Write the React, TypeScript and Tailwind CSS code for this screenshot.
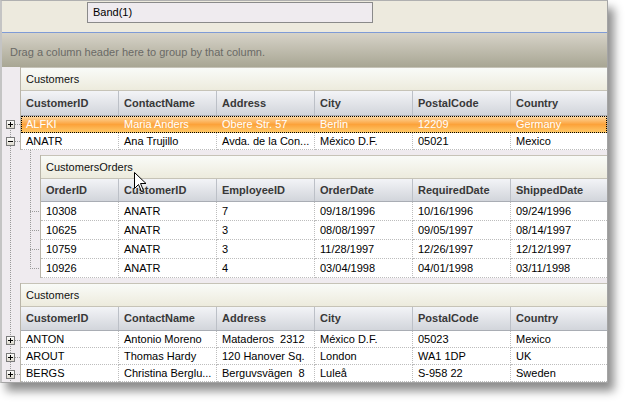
import React from "react";

type BandProps = {
  caption: string;
  cols: string[];
  widths: number[];
  rows: string[][];
  headerH: number;
  rowH: number;
  selected?: number;
  className?: string;
};

function Band({ caption, cols, widths, rows, headerH, rowH, selected, className }: BandProps) {
  return (
    <div className={"flex flex-col border-l border-[#b9b5a8] " + (className ?? "")}>
      <div className="h-[24px] flex items-center pl-[5px] text-[11px] text-[#111] bg-gradient-to-b from-[#f9fbf8] to-[#edebdd] border-t border-b border-[#c6c3b7]">
        {caption}
      </div>
      <div
        className="flex bg-gradient-to-b from-[#f3f4f7] to-[#d2d5db] border-b border-[#a9adb4]"
        style={{ height: headerH }}
      >
        {cols.map((c, i) => (
          <div
            key={c}
            className={
              "flex items-center pl-[5px] text-[11px] font-bold text-[#383838] border-r border-[#bcc0c7] overflow-hidden whitespace-nowrap " +
              (i === cols.length - 1 ? "flex-1 border-r-0" : "shrink-0")
            }
            style={i === cols.length - 1 ? undefined : { width: widths[i] }}
          >
            {c}
          </div>
        ))}
      </div>
      {rows.map((r, ri) => {
        const sel = ri === selected;
        return (
          <div
            key={ri}
            className={
              "flex " +
              (sel
                ? "bg-[linear-gradient(to_bottom,#fddcaa,#fca23a_50%,#ffcc6c)] outline-1 outline-dotted outline-black -outline-offset-1 text-white"
                : "bg-white text-black")
            }
            style={{ height: rowH }}
          >
            {r.map((v, i) => (
              <div
                key={i}
                className={
                  "flex items-center pl-[5px] text-[11px] whitespace-pre overflow-hidden border-b border-dotted " +
                  (sel ? "border-transparent " : "border-[#bdbdbd] ") +
                  (i === r.length - 1 ? "flex-1" : "shrink-0 border-r")
                }
                style={i === r.length - 1 ? undefined : { width: widths[i] }}
              >
                {v}
              </div>
            ))}
          </div>
        );
      })}
    </div>
  );
}

function Box({ x, y, minus }: { x: number; y: number; minus?: boolean }) {
  return (
    <g>
      <rect x={x + 0.5} y={y + 0.5} width={8} height={8} fill="url(#boxg)" stroke="#7b7b7b" />
      <line x1={x + 2} y1={y + 4.5} x2={x + 7} y2={y + 4.5} stroke="#000" />
      {!minus && <line x1={x + 4.5} y1={y + 2} x2={x + 4.5} y2={y + 7} stroke="#000" />}
    </g>
  );
}

export default function App() {
  const parentCols = ["CustomerID", "ContactName", "Address", "City", "PostalCode", "Country"];
  const parentW = [98, 98, 98, 98, 98];
  const childCols = ["OrderID", "CustomerID", "EmployeeID", "OrderDate", "RequiredDate", "ShippedDate"];
  const childW = [78, 98, 98, 98, 98];

  const dot = { stroke: "#9a9a9a", strokeDasharray: "1 1", strokeWidth: 1 };

  return (
    <div className="relative w-[628px] h-[402px] bg-white overflow-hidden font-['Liberation_Sans',Arial,sans-serif]">
      <div className="w-[608px] h-[383px] flex flex-col border-t border-l-2 border-r border-b border-t-[#b0b0b0] border-l-[#c4c4c4] border-r-[#a4a4a4] border-b-[#a4a4a4] shadow-[6px_8px_9px_rgba(0,0,0,0.45)] bg-[#efebef]">
        {/* toolbar */}
        <div className="h-[31px] bg-[#edeade] pt-[1px]">
          <div className="ml-[85px] w-[286px] h-[21px] bg-[#efebef] border border-[#8a8a8a] flex items-center pl-[5px] text-[11px] text-black">
            Band(1)
          </div>
        </div>
        <div className="h-[1px] bg-[#7f9bd6]" />
        {/* group by area */}
        <div className="h-[34px] bg-gradient-to-b from-[#d7d3c8] to-[#a8a694] flex items-center pl-[8px] pt-[4px] text-[11px] text-[#6a6a66]">
          Drag a column header here to group by that column.
        </div>
        {/* grid */}
        <div className="flex-1 flex flex-col">
          <Band
            className="ml-[18px]"
            caption="Customers"
            cols={parentCols}
            widths={parentW}
            headerH={25}
            rowH={17}
            selected={0}
            rows={[
              ["ALFKI", "Maria Anders", "Obere Str. 57", "Berlin", "12209", "Germany"],
              ["ANATR", "Ana Trujillo", "Avda. de la Con...", "México D.F.", "05021", "Mexico"],
            ]}
          />
          <Band
            className="ml-[38px] mt-[5px]"
            caption="CustomersOrders"
            cols={childCols}
            widths={childW}
            headerH={23}
            rowH={19}
            rows={[
              ["10308", "ANATR", "7", "09/18/1996", "10/16/1996", "09/24/1996"],
              ["10625", "ANATR", "3", "08/08/1997", "09/05/1997", "08/14/1997"],
              ["10759", "ANATR", "3", "11/28/1997", "12/26/1997", "12/12/1997"],
              ["10926", "ANATR", "4", "03/04/1998", "04/01/1998", "03/11/1998"],
            ]}
          />
          <Band
            className="ml-[18px] mt-[5px]"
            caption="Customers"
            cols={parentCols}
            widths={parentW}
            headerH={24}
            rowH={17}
            rows={[
              ["ANTON", "Antonio Moreno", "Mataderos  2312", "México D.F.", "05023", "Mexico"],
              ["AROUT", "Thomas Hardy", "120 Hanover Sq.", "London", "WA1 1DP", "UK"],
              ["BERGS", "Christina Berglu...", "Berguvsvägen  8", "Luleå", "S-958 22", "Sweden"],
            ]}
          />
        </div>
      </div>

      {/* tree connectors, expansion boxes, mouse pointer */}
      <svg className="absolute left-0 top-0 pointer-events-none" width={628} height={402}>
        <defs>
          <linearGradient id="boxg" x1="0" y1="0" x2="0" y2="1">
            <stop offset="0" stopColor="#ffffff" />
            <stop offset="1" stopColor="#dcd8cc" />
          </linearGradient>
        </defs>
        <line x1={10.5} y1={128} x2={10.5} y2={382} {...dot} />
        {[124, 141, 340, 357, 374].map((y) => (
          <line key={y} x1={15} y1={y + 0.5} x2={20} y2={y + 0.5} {...dot} />
        ))}
        <line x1={30.5} y1={150} x2={30.5} y2={269} {...dot} />
        {[211, 230, 249, 268].map((y) => (
          <line key={y} x1={30} y1={y + 0.5} x2={40} y2={y + 0.5} {...dot} />
        ))}
        <Box x={6} y={120} />
        <Box x={6} y={137} minus />
        <Box x={6} y={336} />
        <Box x={6} y={353} />
        <Box x={6} y={370} />
        <path
          d="M134.5 172.5 L134.5 188.5 L138.5 184.5 L141.5 191.5 L143.5 190.5 L140.5 183.5 L146 183.5 Z"
          fill="#fff"
          stroke="#000"
          strokeWidth={1}
        />
      </svg>
    </div>
  );
}
